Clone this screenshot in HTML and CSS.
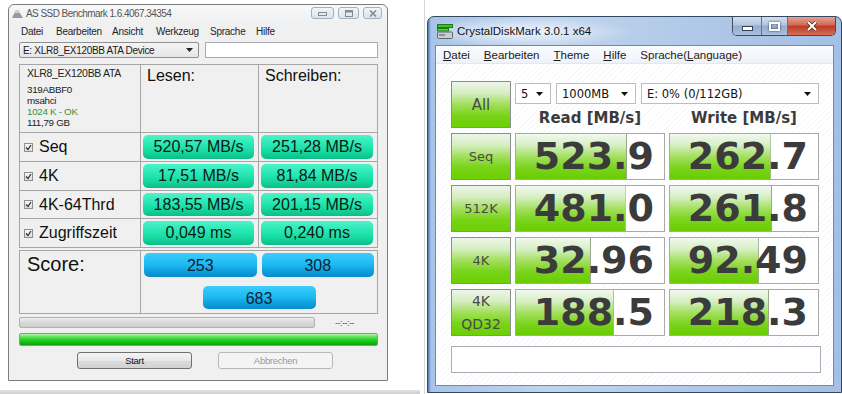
FILE: index.html
```html
<!doctype html>
<html>
<head>
<meta charset="utf-8">
<title>AS SSD / CrystalDiskMark</title>
<link rel="stylesheet" href="styles.css">
</head>
<body>
<div class="screen">
	<div class="left">
		<section class="asssd">
			<div class="as-title">
				<svg class="as-icon" width="11" height="9" viewBox="0 0 11 9"><path d="M0 9 L4 1 L6 1 L11 9 Z" fill="#9a9a9a"/><path d="M4 1 L6 1 L7.5 4 L2.5 4 Z" fill="#d0d0d0"/></svg>
				<span class="as-caption">AS SSD Benchmark 1.6.4067.34354</span>
				<div class="as-btns">
					<span class="as-btn w-min"><svg width="9" height="5" viewBox="0 0 9 5"><rect x="0.5" y="1.5" width="8" height="3" fill="none" stroke="#7f8c99"/></svg></span>
					<span class="as-btn w-max"><svg width="8" height="7" viewBox="0 0 8 7"><rect x="0.5" y="0.5" width="7" height="6" fill="none" stroke="#7f8c99"/><rect x="1" y="1" width="6" height="1.5" fill="#7f8c99"/></svg></span>
					<span class="as-btn w-close"><svg width="8" height="7" viewBox="0 0 8 7"><path d="M1 0.5 L7 6.5 M7 0.5 L1 6.5" stroke="#7f8c99" stroke-width="1.6"/></svg></span>
				</div>
			</div>
			<nav class="as-menu">
				<span class="m1">Datei</span>
				<span class="m2">Bearbeiten</span>
				<span class="m3">Ansicht</span>
				<span class="m4">Werkzeug</span>
				<span class="m5">Sprache</span>
				<span>Hilfe</span>
			</nav>
			<div class="as-body">
				<div class="as-select">
					<div class="as-combo">E: XLR8_EX120BB ATA Device<svg width="7" height="4" viewBox="0 0 7 4"><path d="M0 0 H7 L3.5 4 Z" fill="#222"/></svg></div>
					<div class="as-text"></div>
				</div>
				<div class="as-grid">
					<div class="info">
						<div class="i-name">XLR8_EX120BB ATA</div>
						<div class="i-line">319ABBF0</div>
						<div class="i-line">msahci</div>
						<div class="i-line ok">1024 K - OK</div>
						<div class="i-line">111,79 GB</div>
					</div>
					<div class="head">Lesen:</div>
					<div class="head">Schreiben:</div>

					<div class="label"><span class="chk"><svg width="7" height="7" viewBox="0 0 7 7"><path d="M1 3.5 L3 5.5 L6 1" fill="none" stroke="#333" stroke-width="1.3"/></svg></span>Seq</div>
					<div class="val"><div class="bar">520,57 MB/s</div></div>
					<div class="val"><div class="bar">251,28 MB/s</div></div>

					<div class="label"><span class="chk"><svg width="7" height="7" viewBox="0 0 7 7"><path d="M1 3.5 L3 5.5 L6 1" fill="none" stroke="#333" stroke-width="1.3"/></svg></span>4K</div>
					<div class="val"><div class="bar">17,51 MB/s</div></div>
					<div class="val"><div class="bar">81,84 MB/s</div></div>

					<div class="label"><span class="chk"><svg width="7" height="7" viewBox="0 0 7 7"><path d="M1 3.5 L3 5.5 L6 1" fill="none" stroke="#333" stroke-width="1.3"/></svg></span>4K-64Thrd</div>
					<div class="val"><div class="bar">183,55 MB/s</div></div>
					<div class="val"><div class="bar">201,15 MB/s</div></div>

					<div class="label"><span class="chk"><svg width="7" height="7" viewBox="0 0 7 7"><path d="M1 3.5 L3 5.5 L6 1" fill="none" stroke="#333" stroke-width="1.3"/></svg></span>Zugriffszeit</div>
					<div class="val"><div class="bar">0,049 ms</div></div>
					<div class="val"><div class="bar">0,240 ms</div></div>
				</div>
				<div class="as-score">
					<div class="score-label">Score:</div>
					<div class="score-vals">
						<div class="sbar">253</div>
						<div class="sbar">308</div>
						<div class="sbar total">683</div>
					</div>
				</div>
				<div class="as-progress">
					<div class="pbar"></div>
					<span class="ptime">--:--:--</span>
				</div>
				<div class="as-green"></div>
				<div class="as-buttons">
					<span class="as-button">Start</span>
					<span class="as-button off">Abbrechen</span>
				</div>
			</div>
		</section>
		<div class="strip"></div>
	</div>

	<section class="cdm">
		<div class="cdm-title">
			<svg class="cdm-icon" width="16" height="15" viewBox="0 0 16 15">
				<rect x="0.5" y="0.5" width="15" height="3" fill="#3fbf2a" stroke="#1f7a18"/>
				<rect x="0.5" y="4.5" width="11" height="2.5" fill="#5fd040" stroke="#1f7a18"/>
				<rect x="0.5" y="8" width="15" height="6.5" rx="1" fill="#c9ced4" stroke="#5c6570"/>
				<rect x="2" y="10" width="6" height="2" fill="#8a939d"/>
			</svg>
			<span class="cdm-caption">CrystalDiskMark 3.0.1 x64</span>
			<div class="cdm-btns">
				<span class="cb c-min"><svg width="11" height="5" viewBox="0 0 11 5"><rect x="0.5" y="0.5" width="10" height="4" fill="#fff" stroke="#34445a"/></svg></span>
				<span class="cb c-max"><svg width="11" height="9" viewBox="0 0 11 9"><rect x="1" y="1" width="9" height="7" fill="none" stroke="#fff" stroke-width="2"/></svg></span>
				<span class="cb c-close"><svg width="12" height="10" viewBox="0 0 12 10"><path d="M2 1 L10 9 M10 1 L2 9" stroke="#4a2020" stroke-width="3.4"/><path d="M2 1 L10 9 M10 1 L2 9" stroke="#fff" stroke-width="2"/></svg></span>
			</div>
		</div>
		<div class="cdm-client">
			<nav class="cdm-menu">
				<span><u>D</u>atei</span>
				<span><u>B</u>earbeiten</span>
				<span><u>T</u>heme</span>
				<span><u>H</u>ilfe</span>
				<span>Sprache(<u>L</u>anguage)</span>
			</nav>
			<div class="cdm-main">
				<div class="cdm-grid">
					<div class="cdm-btn big">All</div>
					<div class="cdm-top">
						<div class="cdm-combos">
							<div class="combo c1">5<svg width="7" height="4" viewBox="0 0 7 4"><path d="M0 0 H7 L3.5 4 Z" fill="#111"/></svg></div>
							<div class="combo c2">1000MB<svg width="7" height="4" viewBox="0 0 7 4"><path d="M0 0 H7 L3.5 4 Z" fill="#111"/></svg></div>
							<div class="combo c3">E: 0% (0/112GB)<svg width="7" height="4" viewBox="0 0 7 4"><path d="M0 0 H7 L3.5 4 Z" fill="#111"/></svg></div>
						</div>
						<div class="cdm-heads">
							<span>Read [MB/s]</span>
							<span>Write [MB/s]</span>
						</div>
					</div>

					<div class="cdm-btn">Seq</div>
					<div class="cell" style="--p: 75%">523.9</div>
					<div class="cell" style="--p: 68%">262.7</div>

					<div class="cdm-btn">512K</div>
					<div class="cell" style="--p: 74%">481.0</div>
					<div class="cell" style="--p: 69%">261.8</div>

					<div class="cdm-btn">4K</div>
					<div class="cell" style="--p: 51%">32.96</div>
					<div class="cell" style="--p: 60%">92.49</div>

					<div class="cdm-btn two">4K<br>QD32</div>
					<div class="cell" style="--p: 66%">188.5</div>
					<div class="cell" style="--p: 67%">218.3</div>
				</div>
				<div class="cdm-status"></div>
			</div>
		</div>
	</section>
</div>
</body>
</html>
```

FILE: styles.css
```css
* {
	box-sizing: border-box;
}
body {
	margin: 0;
	background: #fff;
	font-family: "Liberation Sans", Arial, sans-serif;
}
.screen {
	display: flex;
	width: 842px;
	height: 394px;
	overflow: hidden;
	background: #fff;
}

/* ---------- AS SSD ---------- */
.left {
	width: 425px;
	flex: none;
	border-right: 1px solid #d6d6d6;
	padding: 4px 0 0 8px;
	display: flex;
	flex-direction: column;
}
.strip {
	margin: 9px 0 0 -8px;
	height: 4px;
	width: 420px;
	background: linear-gradient(#e4e4e4, #cdcdcd);
}
.asssd {
	width: 380px;
	height: 377px;
	flex: none;
	border: 1px solid #7c7c7c;
	border-radius: 6px 6px 0 0;
	background: #f0f0f0;
}
.as-title {
	height: 17px;
	display: flex;
	align-items: center;
	padding: 0 5px 0 3px;
	background: linear-gradient(#f7f8fa, #f0f1f3);
	border-radius: 6px 6px 0 0;
}
.as-icon {
	margin-right: 3px;
}
.as-caption {
	font-size: 10px;
	letter-spacing: -0.55px;
	color: #555;
}
.as-btns {
	margin-left: auto;
	align-self: flex-start;
	margin-top: 2px;
	display: flex;
	gap: 4px;
}
.as-btn {
	height: 12px;
	display: flex;
	align-items: center;
	justify-content: center;
	border: 1px solid #a3afbc;
	border-radius: 3px;
	background: linear-gradient(#f2f5f8, #dde4eb);
}
.w-min { width: 23px; }
.w-max { width: 21px; }
.w-close { width: 19px; }

.as-menu {
	height: 18px;
	display: flex;
	align-items: center;
	padding-left: 12px;
	font-size: 10px;
	letter-spacing: -0.25px;
	color: #1e1e1e;
}
.as-menu .m1 { width: 35px; }
.as-menu .m2 { width: 56px; }
.as-menu .m3 { width: 44px; }
.as-menu .m4 { width: 54px; }
.as-menu .m5 { width: 46px; }

.as-body {
	padding: 2px 0 0 10px;
}
.as-select {
	display: flex;
	gap: 6px;
	height: 16px;
	width: 359px;
}
.as-combo {
	width: 180px;
	display: flex;
	align-items: center;
	justify-content: space-between;
	padding: 0 5px 0 3px;
	border: 1px solid #8f8f8f;
	border-radius: 2px;
	background: linear-gradient(#f4f4f4, #e6e6e6);
	font-size: 10px;
	letter-spacing: -0.3px;
	color: #1a1a1a;
}
.as-text {
	flex: 1;
	border: 1px solid #a9acb2;
	background: #fff;
}
.as-grid {
	margin-top: 6px;
	width: 359px;
	display: grid;
	grid-template-columns: 120px 117px 118px;
	grid-template-rows: 67px 28px 28px 27px 28px;
	gap: 1px;
	background: #a6a6a6;
	border: 1px solid #a6a6a6;
}
.as-grid > div {
	background: #f0f0f0;
}
.info {
	padding: 3px 0 0 7px;
	font-size: 9.8px;
	letter-spacing: -0.3px;
	color: #222;
	line-height: 11px;
}
.i-name {
	font-size: 10.5px;
	margin-bottom: 5px;
}
.i-line.ok {
	color: #3f8f3f;
}
.head {
	padding: 2px 0 0 6px;
	font-size: 16px;
	line-height: 18px;
	color: #111;
}
.label {
	display: flex;
	align-items: center;
	padding-left: 4px;
	font-size: 16px;
	color: #111;
}
.chk {
	width: 9px;
	height: 9px;
	margin-right: 6px;
	display: flex;
	align-items: center;
	justify-content: center;
	border: 1px solid #8e8f8f;
	background: linear-gradient(#f6f6f6, #dedede);
}
.val {
	padding: 2px 4px 2px 2px;
}
.bar {
	height: 100%;
	border-radius: 5px;
	background: linear-gradient(#4cf3c8 0%, #24e6b2 45%, #16d9a0 70%, #0bbd86 100%);
	font-size: 16px;
	line-height: 24px;
	text-align: center;
	color: #0a1a14;
}
.as-score {
	margin-top: 2px;
	width: 359px;
	height: 64px;
	display: grid;
	grid-template-columns: 120px 236px;
	gap: 1px;
	background: #a6a6a6;
	border: 1px solid #a6a6a6;
}
.as-score > div {
	background: #f0f0f0;
}
.score-label {
	padding: 1px 0 0 7px;
	font-size: 20px;
	line-height: 24px;
	color: #111;
}
.score-vals {
	display: flex;
	flex-wrap: wrap;
	justify-content: center;
	gap: 5px;
	padding: 2px 3px 0 3px;
}
.sbar {
	flex: 1 1 100px;
	height: 24px;
	border-radius: 5px;
	background: linear-gradient(#3ccdfa 0%, #1cb8f2 50%, #0f9fdc 75%, #0a8ccc 100%);
	font-size: 16px;
	line-height: 25px;
	text-align: center;
	color: #0b2233;
}
.sbar.total {
	flex: none;
	width: 113px;
	height: 23px;
}
.as-progress {
	margin-top: 3px;
	display: flex;
	align-items: center;
	height: 11px;
}
.pbar {
	width: 296px;
	height: 11px;
	border: 1px solid #b2b2b2;
	border-radius: 2px;
	background: linear-gradient(#ececec, #d6d6d6 60%, #cfcfcf);
}
.ptime {
	margin-left: 20px;
	font-size: 9px;
	letter-spacing: -0.5px;
	color: #555;
}
.as-green {
	margin-top: 5px;
	width: 359px;
	height: 13px;
	border: 1px solid #8a9a8a;
	border-radius: 2px;
	background: linear-gradient(#b6f5b0 0%, #4fe04a 30%, #1ccc1c 60%, #0b9f0b 100%);
}
.as-buttons {
	margin-top: 6px;
	display: flex;
	gap: 26px;
	padding-left: 58px;
}
.as-button {
	width: 115px;
	height: 17px;
	border: 1px solid #707070;
	border-radius: 3px;
	background: linear-gradient(#f4f4f4, #e8e8e8 50%, #dcdcdc 51%, #d2d2d2);
	font-size: 9.5px;
	letter-spacing: -0.3px;
	line-height: 15px;
	text-align: center;
	color: #111;
}
.as-button.off {
	border-color: #b5b9bd;
	background: #f4f4f4;
	color: #9a9a9a;
}

/* ---------- CrystalDiskMark ---------- */
.cdm {
	margin: 16px 0 0 2px;
	width: 415px;
	height: 377px;
	flex: none;
	display: flex;
	flex-direction: column;
	padding: 0 7px 6px 7px;
	border: 1px solid #33475f;
	border-radius: 7px 7px 0 0;
	background: linear-gradient(to right, #4f79b3 0px, #a9c4e6 3px, #bfd4ee 30%, #aec7e7 70%, #a3bfe3 100%);
}
.cdm-title {
	height: 28px;
	display: flex;
	align-items: flex-start;
	margin: 0 -2px 0 2px;
	background: radial-gradient(ellipse 110px 15px at 85px 15px, rgba(255,255,255,.8), rgba(255,255,255,0));
}
.cdm-icon {
	margin: 7px 4px 0 0;
}
.cdm-caption {
	margin-top: 6px;
	font-size: 11.5px;
	line-height: 16px;
	color: #111;
}
.cdm-btns {
	margin-left: auto;
	display: flex;
	height: 19px;
	border: 1px solid #3e4d62;
	border-top: none;
	border-radius: 0 0 5px 5px;
	overflow: hidden;
}
.cb {
	display: flex;
	align-items: center;
	justify-content: center;
}
.c-min, .c-max {
	background: linear-gradient(#d3dfee, #b3c6df 45%, #94acce 50%, #a9c0de);
	border-right: 1px solid #5f7290;
}
.c-min { width: 29px; }
.c-min svg {
	margin-top: 5px;
}
.c-max { width: 26px; }
.c-max svg {
	filter: drop-shadow(0 0 1px #2a3a50);
}
.c-close {
	width: 47px;
	background: linear-gradient(#e8a091, #d06a54 45%, #bd3a24 50%, #d46e55);
}
.cdm-client {
	flex: 1;
	display: flex;
	flex-direction: column;
	border: 1px solid #7389a8;
	background: repeating-linear-gradient(-45deg, #fff 0 3px, #f7f8fa 3px 4px);
}
.cdm-menu {
	height: 18px;
	display: flex;
	align-items: center;
	gap: 14px;
	padding-left: 7px;
	font-size: 11.5px;
	color: #1a1a1a;
	background: linear-gradient(#fbfcfe, #eef2f8);
	border-bottom: 1px solid #e2e8f0;
}
.cdm-main {
	padding: 17px 0 0 15px;
}
.cdm-grid {
	display: grid;
	grid-template-columns: 60px 150px 150px;
	grid-auto-rows: 47px;
	column-gap: 4px;
	row-gap: 5px;
}
.cdm-btn {
	display: flex;
	align-items: center;
	justify-content: center;
	border: 1px solid #8d8d8d;
	background: linear-gradient(#eef5ea 0%, #d4eec0 25%, #a2df5a 50%, #78d418 75%, #6ccf02 100%);
	font-family: "DejaVu Sans", Verdana, sans-serif;
	font-size: 13px;
	color: #4a4a4a;
	text-align: center;
}
.cdm-btn.big {
	font-size: 15px;
}
.cdm-btn.two {
	line-height: 23px;
	font-size: 14px;
}
.cdm-top {
	grid-column: 2 / 4;
	display: flex;
	flex-direction: column;
}
.cdm-combos {
	margin-top: 2px;
	height: 22px;
	display: flex;
	gap: 5px;
}
.combo {
	display: flex;
	align-items: center;
	justify-content: space-between;
	padding: 0 7px 0 5px;
	border: 1px solid #bdbdbd;
	background: #fff;
	font-family: "DejaVu Sans", Verdana, sans-serif;
	font-size: 11.5px;
	color: #111;
}
.combo.c1 { width: 36px; }
.combo.c2 { width: 80px; }
.combo.c3 { flex: 1; }
.cdm-heads {
	margin-top: 4px;
	display: grid;
	grid-template-columns: 150px 150px;
	column-gap: 4px;
	font: bold 15px/20px "DejaVu Sans", Verdana, sans-serif;
	color: #3b3b3b;
	text-align: center;
}
.cell {
	border: 1px solid #a9a9a9;
	background-color: #fff;
	background-image: linear-gradient(to left, #98a88a 1px, transparent 1px), linear-gradient(#f2f8ef 0%, #d6efc4 25%, #a4e060 50%, #7ad41c 75%, #6acc00 100%);
	background-size: var(--p) 100%;
	background-repeat: no-repeat;
	padding-right: 10px;
	text-align: right;
	font: bold 38px/45px "DejaVu Sans", Verdana, sans-serif;
	color: #3b3b3b;
}
.cdm-status {
	margin-top: 10px;
	width: 370px;
	height: 27px;
	border: 1px solid #a9acb4;
	background: #fff;
}
```
